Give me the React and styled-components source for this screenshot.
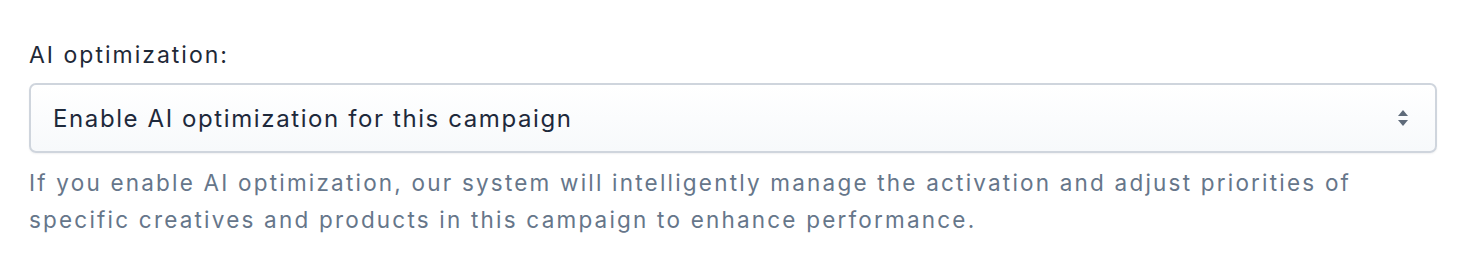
import React from "react";
import styled, { createGlobalStyle } from "styled-components";

const GlobalStyle = createGlobalStyle`
  body {
    margin: 0;
    background: #ffffff;
    font-family: Inter, "Noto Sans", "Liberation Sans", sans-serif;
  }
`;

const Field = styled.div`
  padding: 40px 29px 0 29px;
`;

const Label = styled.label`
  display: block;
  font-size: 23px;
  line-height: 30px;
  letter-spacing: 2px;
  color: #1f2937;
  margin-bottom: 13px;
`;

const SelectWrap = styled.div`
  position: relative;
`;

const Select = styled.select`
  appearance: none;
  width: 100%;
  height: 70px;
  box-sizing: border-box;
  padding: 0 60px 0 22px;
  font-family: inherit;
  font-size: 24px;
  letter-spacing: 1.6px;
  color: #1e293b;
  border: 2px solid #cfd5dd;
  border-radius: 7px;
  background: linear-gradient(#ffffff, #f7f9fb);
  box-shadow: 0 1px 2px rgba(15, 23, 42, 0.06);
  outline: none;
`;

const Arrows = styled.svg`
  position: absolute;
  right: 28px;
  top: 50%;
  transform: translateY(-50%);
  pointer-events: none;
`;

const Help = styled.p`
  margin: 11px 0 0 0;
  font-size: 22.5px;
  line-height: 37px;
  letter-spacing: 2.2px;
  color: #66768a;
`;

export default function App() {
  return (
    <>
      <GlobalStyle />
      <Field>
        <Label htmlFor="ai-opt">AI optimization:</Label>
        <SelectWrap>
          <Select id="ai-opt" defaultValue="enable">
            <option value="enable">Enable AI optimization for this campaign</option>
            <option value="disable">Disable AI optimization</option>
          </Select>
          <Arrows width="12" height="18" viewBox="0 0 12 18">
            <path d="M6 1 L11 7 H1 Z" fill="#5f6b7a" />
            <path d="M6 17 L11 11 H1 Z" fill="#5f6b7a" />
          </Arrows>
        </SelectWrap>
        <Help>
          If you enable AI optimization, our system will intelligently manage the activation and adjust priorities of
          specific creatives and products in this campaign to enhance performance.
        </Help>
      </Field>
    </>
  );
}
